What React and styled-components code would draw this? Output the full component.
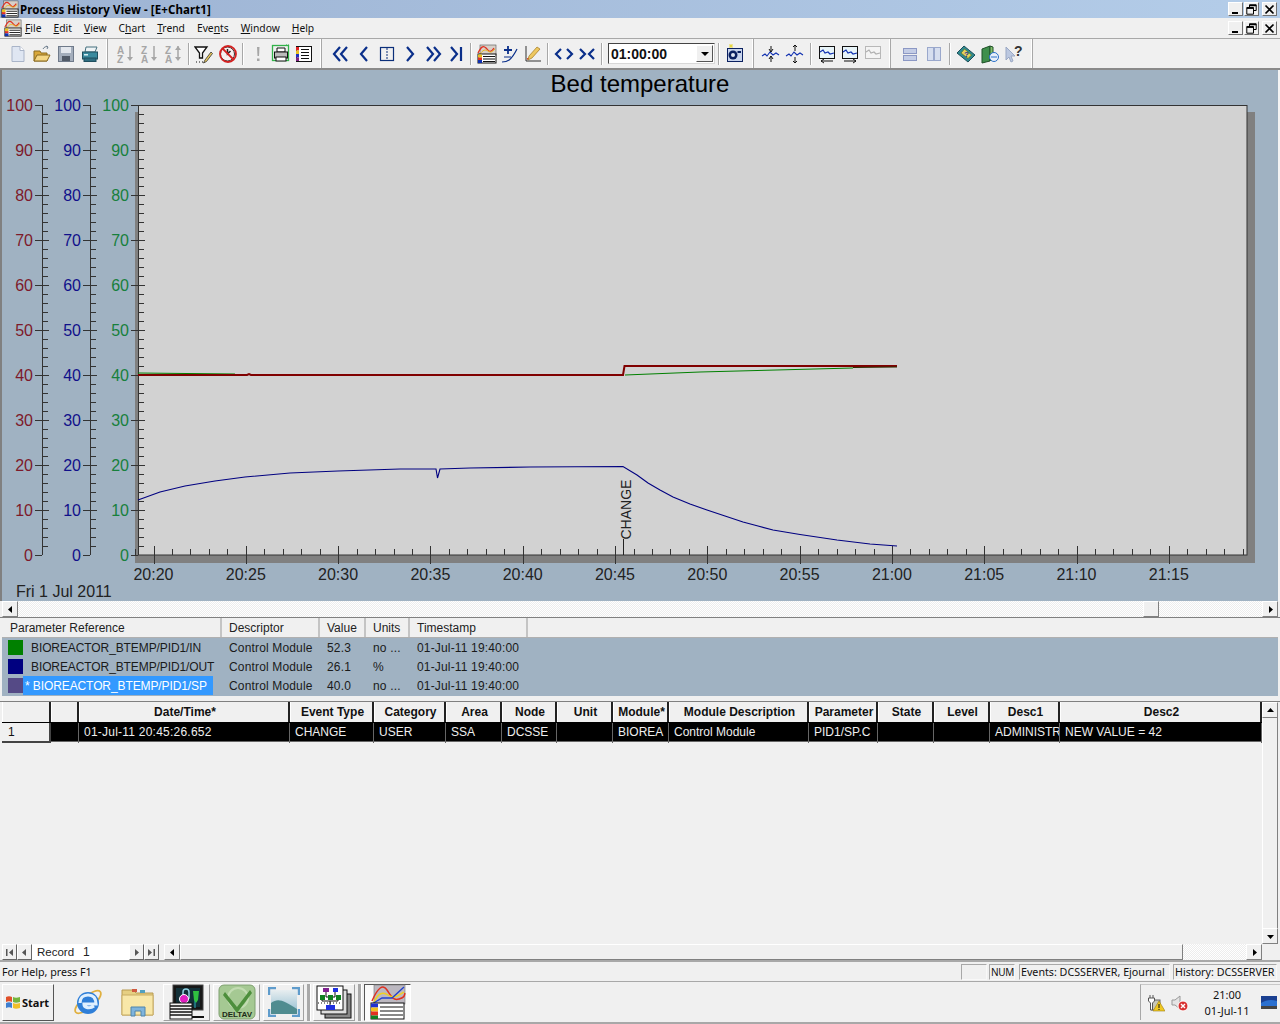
import React from "react";
import styled, { createGlobalStyle } from "styled-components";

const UI = `"Noto Sans", "DejaVu Sans", sans-serif`;
const ARIAL = `"Liberation Sans", Arial, sans-serif`;

const GlobalStyle = createGlobalStyle`
  html, body {
    margin: 0;
    padding: 0;
    background: #f0f0f0;
  }
`;

const menuItems = [
  ["", "F", "ile"],
  ["", "E", "dit"],
  ["", "V", "iew"],
  ["C", "h", "art"],
  ["", "T", "rend"],
  ["Eve", "n", "ts"],
  ["", "W", "indow"],
  ["", "H", "elp"],
];

const legendCols = [
  ["Parameter Reference", 219],
  ["Descriptor", 98],
  ["Value", 46],
  ["Units", 44],
  ["Timestamp", 118],
];

const legendRows = [
  { color: "#008000", name: "BIOREACTOR_BTEMP/PID1/IN", value: "52.3", units: "no ..." },
  { color: "#000080", name: "BIOREACTOR_BTEMP/PID1/OUT", value: "26.1", units: "%" },
  { color: "#554a86", name: "BIOREACTOR_BTEMP/PID1/SP", value: "40.0", units: "no ...", selected: true },
];

const gridCols = [
  ["Date/Time*", "01-Jul-11 20:45:26.652"],
  ["Event Type", "CHANGE"],
  ["Category", "USER"],
  ["Area", "SSA"],
  ["Node", "DCSSE"],
  ["Unit", ""],
  ["Module*", "BIOREA"],
  ["Module Description", "Control Module"],
  ["Parameter", "PID1/SP.C"],
  ["State", ""],
  ["Level", ""],
  ["Desc1", "ADMINISTR"],
  ["Desc2", "NEW VALUE = 42"],
];

const GRID_TEMPLATE = "49px 28px 211px 84px 72px 56px 55px 56px 56px 140px 69px 56px 56px 70px 202px";

const App = () => (
  <Screen>
    <GlobalStyle />
    <TitleBar>
      <ChartGlyph size={18} />
      <TitleText>Process History View - [E+Chart1]</TitleText>
      <WindowButtons />
    </TitleBar>
    <MenuBar>
      <ChartGlyph size={18} />
      <MenuList>
        {menuItems.map(([before, key, after]) => (
          <MenuItem key={before + key + after}>
            {before}
            <u>{key}</u>
            {after}
          </MenuItem>
        ))}
      </MenuList>
      <WindowButtons />
    </MenuBar>
    <Toolbar>
      <Band $w={108} $pl={6}>
        <ToolBtn><NewIcon /></ToolBtn>
        <ToolBtn><OpenIcon /></ToolBtn>
        <ToolBtn><SaveIcon /></ToolBtn>
        <ToolBtn><PrintIcon /></ToolBtn>
      </Band>
      <Band $w={214} $pl={6}>
        <ToolBtn><SortIcon top="A" bottom="Z" /></ToolBtn>
        <ToolBtn><SortIcon top="Z" bottom="A" /></ToolBtn>
        <ToolBtn><SortIcon top="Z" bottom="A" both /></ToolBtn>
        <Sep $m={2} />
        <ToolBtn><FilterIcon /></ToolBtn>
        <ToolBtn><NoClockIcon /></ToolBtn>
        <Sep $m={2} />
        <ToolBtn $w={23}><AlertIcon /></ToolBtn>
        <ToolBtn $w={23}><PreviewIcon /></ToolBtn>
        <ToolBtn $w={23}><ListIcon /></ToolBtn>
      </Band>
      <Band $w={432} $pl={7}>
        <ToolBtn $w={23}><NavIcon d="M9 3 3 10l6 7M16 3l-6 7 6 7" /></ToolBtn>
        <ToolBtn $w={23}><NavIcon d="M13 3 7 10l6 7" /></ToolBtn>
        <ToolBtn $w={23}><PaneIcon /></ToolBtn>
        <ToolBtn $w={23}><NavIcon d="M7 3l6 7-6 7" /></ToolBtn>
        <ToolBtn $w={23}><NavIcon d="M4 3l6 7-6 7M11 3l6 7-6 7" /></ToolBtn>
        <ToolBtn $w={23}><NavIcon d="M5 3l6 7-6 7M15 3v14" /></ToolBtn>
        <Sep />
        <ToolBtn $w={23}><ChartGlyph size={20} /></ToolBtn>
        <ToolBtn $w={23}><PlusTrendIcon /></ToolBtn>
        <ToolBtn $w={23}><EditTrendIcon /></ToolBtn>
        <Sep />
        <ToolBtn $w={23}><NavIcon d="M7 5 2 10l5 5M13 5l5 5-5 5" /></ToolBtn>
        <ToolBtn $w={23}><NavIcon d="M3 5l5 5-5 5M17 5l-5 5 5 5" /></ToolBtn>
        <Sep />
        <Combo>
          <ComboText>01:00:00</ComboText>
          <ComboDrop><DownArrow /></ComboDrop>
        </Combo>
        <Sep />
        <ToolBtn $w={23}><CameraIcon /></ToolBtn>
      </Band>
      <Band $w={137} $pl={5}>
        <ToolBtn><ZoomTrendIcon d="M10 2v6M8 5l2 3 2-3M10 18v-6M8 15l2-3 2 3" /></ToolBtn>
        <ToolBtn><ZoomTrendIcon d="M10 1v6M8 3l2-2 2 2M10 19v-6M8 17l2 2 2-2" /></ToolBtn>
        <Sep />
        <ToolBtn $w={23}><ScaleIcon d="M16 17H4M7 15l-3 2 3 2" /></ToolBtn>
        <ToolBtn $w={23}><ScaleIcon d="M4 17h12M13 15l3 2-3 2" /></ToolBtn>
        <ToolBtn $w={23}><ScaleIcon faded /></ToolBtn>
      </Band>
      <Band $w={142} $pl={7}>
        <ToolBtn><StackIcon /></ToolBtn>
        <ToolBtn><StackIcon vertical /></ToolBtn>
        <Sep />
        <ToolBtn><BookIcon /></ToolBtn>
        <ToolBtn><BooksIcon /></ToolBtn>
        <ToolBtn><HelpPointerIcon /></ToolBtn>
      </Band>
    </Toolbar>

    <ChartPanel>
      <ChartTitle>Bed temperature</ChartTitle>
      <TrendChart />
      <ChartDate>Fri 1 Jul 2011</ChartDate>
    </ChartPanel>

    <HScroll>
      <ScrollBtn><SmallArrow dir="left" /></ScrollBtn>
      <ScrollTrack $w={1125} />
      <ScrollBtn />
      <ScrollTrack $w={103} />
      <ScrollBtn><SmallArrow dir="right" /></ScrollBtn>
    </HScroll>

    <Legend>
      <LegendHead>
        {legendCols.map(([label, w]) => (
          <LegendHeadCell key={label} $w={w}>{label}</LegendHeadCell>
        ))}
      </LegendHead>
      {legendRows.map((row) => (
        <LegendRow key={row.name}>
          <Swatch $color={row.color} />
          <LegendName $selected={row.selected}>
            {row.selected ? "* " : ""}
            {row.name}
          </LegendName>
          <LegendCell $w={98}>Control Module</LegendCell>
          <LegendCell $w={46}>{row.value}</LegendCell>
          <LegendCell $w={44}>{row.units}</LegendCell>
          <LegendCell $w={118}>01-Jul-11 19:40:00</LegendCell>
        </LegendRow>
      ))}
    </Legend>

    <GridPanel>
      <GridMain>
        <GridTable>
          <GridHead>
            <HeadCell />
            <HeadCell />
            {gridCols.map(([label]) => (
              <HeadCell key={label}>{label}</HeadCell>
            ))}
          </GridHead>
          <GridRow>
            <RowHeader>1</RowHeader>
            <RowCell />
            {gridCols.map(([label, value]) => (
              <RowCell key={label} $spaced={label === "Date/Time*"}>{value}</RowCell>
            ))}
          </GridRow>
        </GridTable>
        <VScroll>
          <ScrollBtn><SmallArrow dir="up" /></ScrollBtn>
          <VTrack />
          <ScrollBtn><SmallArrow dir="down" /></ScrollBtn>
        </VScroll>
      </GridMain>
      <Pager>
        <PagerBtn><SmallArrow dir="first" /></PagerBtn>
        <PagerBtn><SmallArrow dir="left" muted /></PagerBtn>
        <PagerLabel>Record</PagerLabel>
        <PagerInput>1</PagerInput>
        <PagerBtn><SmallArrow dir="right" muted /></PagerBtn>
        <PagerBtn><SmallArrow dir="last" /></PagerBtn>
        <PagerGap />
        <ScrollBtn><SmallArrow dir="left" /></ScrollBtn>
        <PagerThumb />
        <PagerTrack />
        <ScrollBtn><SmallArrow dir="right" /></ScrollBtn>
        <PagerCorner />
      </Pager>
    </GridPanel>

    <StatusBar>
      <StatusHelp>For Help, press F1</StatusHelp>
      <StatusPane $w={26} />
      <StatusPane $w={26} $ml={2} $tight>NUM</StatusPane>
      <StatusPane $w={151} $ml={4}>Events: DCSSERVER, Ejournal</StatusPane>
      <StatusPane $w={104} $ml={3}>History: DCSSERVER</StatusPane>
    </StatusBar>

    <Taskbar>
      <StartButton>
        <WindowsFlag />
        <span>Start</span>
      </StartButton>
      <QuickIcon $w={49} $ml={9}><IeIcon /></QuickIcon>
      <QuickIcon $w={51}><FolderIcon /></QuickIcon>
      <TaskButton $w={47}><SecurityIcon /></TaskButton>
      <TaskButton $w={47}><DeltaVIcon /></TaskButton>
      <TaskButton $w={41}><PictureIcon /></TaskButton>
      <TaskGrip />
      <TaskButton $w={42}><NetworkIcon /></TaskButton>
      <TaskGrip />
      <TaskButton $w={47} $active><TrendAppIcon /></TaskButton>
      <Tray>
        <PlugWarnIcon />
        <MuteIcon />
        <Clock>
          <div>21:00</div>
          <div>01-Jul-11</div>
        </Clock>
        <DesktopIcon />
      </Tray>
    </Taskbar>
  </Screen>
);

export default App;

/* window buttons */

const WindowButtons = () => (
  <WinGroup>
    <WinBtn>
      <svg width="11" height="11" viewBox="0 0 11 11"><path d="M2 9h6" stroke="#000" strokeWidth="2" /></svg>
    </WinBtn>
    <WinBtn>
      <svg width="11" height="11" viewBox="0 0 11 11" fill="none" stroke="#000">
        <path d="M3.5 3V.8h6.7v5.7H8" /><path d="M3.5 1.5h6.7" strokeWidth="1.5" />
        <path d="M.8 3.5h6.7v6.7H.8z" /><path d="M.8 4.2h6.7" strokeWidth="1.5" />
      </svg>
    </WinBtn>
    <WinBtn $close>
      <svg width="11" height="11" viewBox="0 0 11 11"><path d="M1.5 1.5l8 8M9.5 1.5l-8 8" stroke="#000" strokeWidth="1.7" /></svg>
    </WinBtn>
  </WinGroup>
);

/* chart */

const RED = "#7d1a2a";
const BLUE = "#10108a";
const GREEN = "#17803c";
const TICK = "#333";
const xMajor = [...Array(12).keys()].map((i) => 153.5 + i * 92.3);
const timeLabels = ["20:20", "20:25", "20:30", "20:35", "20:40", "20:45", "20:50", "20:55", "21:00", "21:05", "21:10", "21:15"];
const bluePoints =
  "138,500 160,492 185,486 215,481 245,477 290,473 338,471 400,469 436,469 437.5,478 440,469 470,468 530,467 623,466.5 " +
  "637,475 648,483 660,490 673,497 690,504 707,510 725,516 743,522 758,526 773,530 800,534.5 837,540 870,544 897,546";

const YAxis = ({ x, color }) => {
  const marks = [];
  for (let v = 0; v <= 100; v += 2) {
    const y = 555 - v * 4.5;
    if (v % 10 === 0) {
      marks.push(
        <path key={v} d={`M${x - 7} ${y + 0.5}H${x + (v === 100 || v === 0 ? 0 : 7)}`} stroke={TICK} />
      );
      marks.push(
        <text key={`t${v}`} x={x - 9} y={y + 6} textAnchor="end" fontSize="16" fill={color} fontFamily={ARIAL}>
          {v}
        </text>
      );
    } else {
      marks.push(<path key={v} d={`M${x} ${y + 0.5}H${x + 6}`} stroke={TICK} />);
    }
  }
  return (
    <g>
      <path d={`M${x + 0.5} 105V555`} stroke={TICK} />
      {marks}
    </g>
  );
};

const TrendChart = () => {
  const minor = [];
  for (let x = 135.1; x < 1246; x += 18.46) minor.push(x);
  return (
    <ChartSvg viewBox="2 98 1276 485" width="1276" height="485">
      <rect x="135" y="112" width="1120" height="451" fill="#808080" />
      <rect x="138.5" y="105.5" width="1108.5" height="449.5" fill="#d2d2d2" stroke="#333" />
      <YAxis x={42} color={RED} />
      <YAxis x={90} color={BLUE} />
      <YAxis x={138} color={GREEN} />
      {minor.map((x) => (
        <path key={x} d={`M${Math.round(x) + 0.5} 549V555`} stroke={TICK} />
      ))}
      {xMajor.map((x, i) => (
        <g key={x}>
          <path d={`M${Math.round(x) + 0.5} 546V564`} stroke={TICK} />
          <text x={x} y="580" textAnchor="middle" fontSize="16" fill="#222" fontFamily={ARIAL}>
            {timeLabels[i]}
          </text>
        </g>
      ))}
      <polyline points="138,373 235,374" fill="none" stroke="#008000" />
      <polyline points="625,375 700,372 853,368" fill="none" stroke="#008000" />
      <polyline points={bluePoints} fill="none" stroke="#000080" strokeWidth="1.1" />
      <polyline points="138,375 247,375 249,374 251,375 623,375 624.5,366 897,366" fill="none" stroke="#800000" strokeWidth="2" />
      <polyline points="853,367.5 897,367" fill="none" stroke="#2b2b00" />
      <path d="M623.5 539V555" stroke="#222" />
      <text
        transform="translate(631 539.5) rotate(-90)"
        fontSize="14"
        fill="#222"
        fontFamily={ARIAL}
      >
        CHANGE
      </text>
    </ChartSvg>
  );
};

/* small arrows for scrollbars and the record pager */

const arrowPaths = {
  left: "M7 2v7L3 5.5z",
  right: "M4 2v7l4-3.5z",
  up: "M2 7h7L5.5 3z",
  down: "M2 4h7L5.5 8z",
  first: "M2 2h1.5v7H2zM9 2v7L5 5.5z",
  last: "M9 2H7.5v7H9zM2 2v7l4-3.5z",
};

const SmallArrow = ({ dir, muted }) => (
  <svg width="11" height="11" viewBox="0 0 11 11">
    <path d={arrowPaths[dir]} fill={muted || dir === "first" || dir === "last" ? "#555" : "#000"} />
  </svg>
);

/* toolbar icons */

const NewIcon = () => (
  <Ico viewBox="0 0 20 20">
    <path d="M4 2.5h8l4 4v11H4z" fill="#dfe6f2" stroke="#a9b4c8" />
    <path d="M12 2.5v4h4" fill="#fff" stroke="#a9b4c8" />
  </Ico>
);

const OpenIcon = () => (
  <Ico viewBox="0 0 20 20">
    <path d="M2 7h6l1 2h6v8H2z" fill="#d9a83a" stroke="#8a6a20" />
    <path d="M2 17l3-6h13l-3 6z" fill="#f4d683" stroke="#8a6a20" />
    <path d="M11 5c1-2 3-3 5-2M16 3l-2-1M16 3l-1 2" fill="none" stroke="#6e7e8e" />
  </Ico>
);

const SaveIcon = () => (
  <Ico viewBox="0 0 20 20">
    <rect x="2.5" y="2.5" width="15" height="15" fill="#a4aebc" stroke="#6f7a8a" />
    <rect x="5" y="3" width="10" height="6" fill="#e4e8ee" />
    <rect x="6" y="12" width="8" height="5" fill="#525b68" />
  </Ico>
);

const PrintIcon = () => (
  <Ico viewBox="0 0 20 20">
    <path d="M6 3h11l-2 5H5z" fill="#eef3f5" stroke="#45707f" />
    <rect x="2.5" y="8" width="15" height="7" fill="#3a8a9e" stroke="#1f4f5f" />
    <rect x="4" y="14" width="12" height="3.5" fill="#2f6d80" stroke="#1f4f5f" />
    <rect x="4" y="10" width="4" height="1.5" fill="#d5edf2" />
  </Ico>
);

const SortIcon = ({ top, bottom, both }) => (
  <Ico viewBox="0 0 20 20">
    <text x="1" y="9.5" fontSize="10" fontWeight="700" fill="#a6a6a6" fontFamily={ARIAL}>{top}</text>
    <text x="1" y="18.5" fontSize="10" fontWeight="700" fill="#a6a6a6" fontFamily={ARIAL}>{bottom}</text>
    <path d="M14 2v12" stroke="#a6a6a6" strokeWidth="1.5" />
    <path d="M11 13h6l-3 4z" fill="#a6a6a6" />
    {both && <path d="M11 6h6l-3-4z" fill="#a6a6a6" />}
  </Ico>
);

const FilterIcon = () => (
  <Ico viewBox="0 0 20 20">
    <path d="M1 3h12L8.5 9v5h-3V9z" fill="#fff" stroke="#111" strokeWidth="1.3" />
    <path d="M2 18h1M5 18h1M8 18h1" stroke="#111" />
    <path d="M11 16l-1.5 3 3-1.5 6-8-1.5-1.5z" fill="#e8c85c" stroke="#333" strokeWidth=".8" />
  </Ico>
);

const NoClockIcon = () => (
  <Ico viewBox="0 0 20 20">
    <circle cx="9.5" cy="10" r="7" fill="#f6eeee" stroke="#333" />
    <path d="M9.5 5v5l3-3" fill="none" stroke="#222" strokeWidth="1.5" />
    <circle cx="10" cy="10" r="8" fill="none" stroke="#d42020" strokeWidth="1.8" />
    <path d="M4.5 4.5l11 11" stroke="#d42020" strokeWidth="1.8" />
  </Ico>
);

const AlertIcon = () => (
  <Ico viewBox="0 0 20 20">
    <path d="M9 3h2.5l-.5 9H9.5z" fill="#a6a6a6" />
    <rect x="9" y="14.5" width="2.5" height="2.5" fill="#a6a6a6" />
  </Ico>
);

const PreviewIcon = () => (
  <Ico viewBox="0 0 20 20">
    <rect x="1.5" y="1.5" width="16" height="15" fill="none" stroke="#33b24a" strokeWidth="1.3" />
    <path d="M15 1h4" stroke="#33b24a" strokeDasharray="1 1" />
    <path d="M6 4h8v4H6z" fill="#fff" stroke="#111" />
    <rect x="3.5" y="8" width="13" height="6" fill="#bbb" stroke="#111" />
    <rect x="5" y="13" width="10" height="4" fill="#fff" stroke="#111" />
  </Ico>
);

const ListIcon = () => (
  <Ico viewBox="0 0 20 20">
    <rect x="2.5" y="2.5" width="15" height="15" fill="#fff" stroke="#111" />
    <rect x="2" y="3" width="3" height="3.5" fill="#e02020" />
    <rect x="2" y="6.5" width="3" height="3.5" fill="#e8c020" />
    <rect x="2" y="10" width="3" height="3.5" fill="#2030c0" />
    <rect x="2" y="13.5" width="3" height="3.5" fill="#802080" />
    <path d="M7 5.5h8M7 8.5h8M7 11.5h8M7 14.5h8" stroke="#111" />
  </Ico>
);

const NavIcon = ({ d }) => (
  <Ico viewBox="0 0 20 20">
    <path d={d} fill="none" stroke="#0a2f8a" strokeWidth="2.2" />
  </Ico>
);

const PaneIcon = () => (
  <Ico viewBox="0 0 20 20">
    <rect x="3.5" y="3.5" width="13" height="13" fill="none" stroke="#0a2f7a" strokeWidth="1.2" />
    <path d="M10 4v12" stroke="#0a2f7a" strokeDasharray="2 1" />
  </Ico>
);

const PlusTrendIcon = () => (
  <Ico viewBox="0 0 20 20">
    <path d="M8 2v8M4 6h8" stroke="#0a2f8a" strokeWidth="1.8" />
    <path d="M4 13h7" stroke="#0a2f8a" />
    <path d="M2 18c5 0 9-1 15-13" fill="none" stroke="#0a2f8a" strokeWidth="1.2" />
  </Ico>
);

const EditTrendIcon = () => (
  <Ico viewBox="0 0 20 20">
    <path d="M3 2v15h15" fill="none" stroke="#333" />
    <path d="M4 15c4-1 6-5 12-10" fill="none" stroke="#d83020" strokeWidth="1.3" />
    <path d="M5 16l1-4 8-9 3 2-8 9z" fill="#eec860" stroke="#a07820" strokeWidth=".7" />
  </Ico>
);

const CameraIcon = () => (
  <Ico viewBox="0 0 20 20">
    <path d="M6 0v4M4 2h4M4.5.5l3 3M7.5.5l-3 3" stroke="#e8d840" />
    <rect x="2.5" y="4.5" width="15" height="13" fill="#c8d4ec" stroke="#0a2060" />
    <circle cx="8" cy="11" r="4.5" fill="#0a2060" />
    <circle cx="8" cy="11" r="2" fill="#dfe6f2" />
    <rect x="12.5" y="7" width="3.5" height="2" fill="#0a2060" />
  </Ico>
);

const ZoomTrendIcon = ({ d }) => (
  <Ico viewBox="0 0 20 20">
    <path d="M1 12l3-2 2 2 3-4 3 3 3-2 3 2" fill="none" stroke="#1030b0" strokeWidth="1.1" />
    <path d={d} fill="none" stroke="#111" />
  </Ico>
);

const ScaleIcon = ({ d, faded }) => (
  <Ico viewBox="0 0 20 20">
    <rect x="2.5" y="2.5" width="15" height="12" fill={faded ? "#f4f4f4" : "#e8f4f8"} stroke={faded ? "#b8b8b8" : "#111"} />
    <path d="M3 8l3-2 2 3 3-1 2 2 4-1" fill="none" stroke={faded ? "#b0b0b0" : "#1030b0"} strokeWidth="1.2" />
    {d && <path d={d} fill="none" stroke="#111" />}
  </Ico>
);

const StackIcon = ({ vertical }) => (
  <Ico viewBox="0 0 20 20">
    {vertical ? (
      <>
        <rect x="3.5" y="3.5" width="6" height="13" fill="#d6deef" stroke="#9aa8cc" />
        <rect x="10.5" y="3.5" width="6" height="13" fill="#d6deef" stroke="#9aa8cc" />
      </>
    ) : (
      <>
        <rect x="3.5" y="4.5" width="13" height="5" fill="#c4cde6" stroke="#8c98c4" />
        <rect x="3.5" y="11.5" width="13" height="5" fill="#c4cde6" stroke="#8c98c4" />
      </>
    )}
  </Ico>
);

const BookIcon = () => (
  <Ico viewBox="0 0 20 20">
    <path d="M1 9l7-7 11 9-7 7z" fill="#2f8a8f" stroke="#1d4f5a" />
    <path d="M5 9l3.5-4 7 6-3.500 3.500z" fill="#e8d25a" stroke="#52702a" strokeWidth=".7" />
    <text x="8" y="13" fontSize="8" fontWeight="700" fill="#1030a0" fontFamily={ARIAL}>?</text>
  </Ico>
);

const BooksIcon = () => (
  <Ico viewBox="0 0 20 20">
    <path d="M2 5l8-3v15l-8 2z" fill="#3f8f4c" stroke="#1f5028" />
    <path d="M10 2l3 1v10l-3 4z" fill="#83c06a" stroke="#1f5028" />
    <circle cx="14" cy="13" r="4.5" fill="#e8f0fa" stroke="#2a70c8" />
    <path d="M11 13h6" stroke="#2a70c8" />
  </Ico>
);

const HelpPointerIcon = () => (
  <Ico viewBox="0 0 20 20">
    <path d="M2 3v13l3-3 2 5 2-1-2-5h4z" fill="#bcc8e0" stroke="#9aa8c4" />
    <text x="10" y="12" fontSize="14" fontWeight="700" fill="#333" fontFamily={ARIAL}>?</text>
  </Ico>
);

const ChartGlyph = ({ size }) => (
  <GlyphSvg width={size} height={size} viewBox="0 0 20 20">
    <rect x="3" y="1" width="16" height="10" fill="#d8d0c8" stroke="#555" strokeWidth=".6" />
    <path d="M1 9C4 3 6 1 9 4s4 6 8 0" fill="none" stroke="#e03020" strokeWidth="1.3" />
    <path d="M3 10c3-4 5-5 8-3s4 1 7-2" fill="none" stroke="#e8b820" />
    <rect x="1" y="10" width="18" height="9" fill="#fff" stroke="#111" />
    <rect x="1" y="10.5" width="4" height="3" fill="#e8c020" />
    <rect x="1" y="13.5" width="4" height="2.5" fill="#e03020" />
    <rect x="1" y="16" width="4" height="3" fill="#1030b0" />
    <path d="M6 12.5h12M6 15h12M6 17.5h12" stroke="#111" />
  </GlyphSvg>
);

/* taskbar icons */

const WindowsFlag = () => (
  <svg width="16" height="16" viewBox="0 0 16 16">
    <path d="M1 3c2-1 4-1 6 0v5c-2-1-4-1-6 0z" fill="#e0502a" />
    <path d="M8 3c2 1 4 1 7 0v5c-3 1-5 1-7 0z" fill="#74b53c" />
    <path d="M1 9c2-1 4-1 6 0v5c-2-1-4-1-6 0z" fill="#3f7fd0" />
    <path d="M8 9c2 1 4 1 7 0v5c-3 1-5 1-7 0z" fill="#f0bf2a" />
  </svg>
);

const IeIcon = () => (
  <svg width="32" height="32" viewBox="0 0 32 32">
    <ellipse cx="16" cy="16" rx="16" ry="6" transform="rotate(-40 16 16)" fill="none" stroke="#e0b040" strokeWidth="1.8" />
    <circle cx="16" cy="17" r="11" fill="#2f7fd8" />
    <path d="M8 17c0-5 3-8 8-8s8 3 8 9H12c0 4 6 5 10 2" fill="none" stroke="#dff0ff" strokeWidth="3.2" />
  </svg>
);

const FolderIcon = () => (
  <svg width="34" height="32" viewBox="0 0 34 32">
    <path d="M1 4h11l3 3h17v22H1z" fill="#e6cf82" stroke="#b89a50" />
    <path d="M1 9h31v20H1z" fill="#f8e7a8" stroke="#c8ac62" />
    <rect x="11" y="3" width="5" height="3" fill="#d05a40" />
    <rect x="19" y="4" width="5" height="3" fill="#50a0c0" />
    <path d="M10 30V21h14v9h-4v-5h-6v5z" fill="#7fb4dc" stroke="#4f84ac" />
  </svg>
);

const SecurityIcon = () => (
  <svg width="36" height="36" viewBox="0 0 36 36">
    <rect x="4" y="1" width="30" height="25" fill="#161616" stroke="#444" />
    <rect x="7" y="4" width="24" height="19" fill="#123038" />
    <path d="M26 8v16" stroke="#2fb0c0" />
    <path d="M14 8c0-4 6-4 6 0v6h-6z" fill="none" stroke="#90d0e0" strokeWidth="1.5" />
    <circle cx="15" cy="15" r="4.5" fill="#e020c0" stroke="#fff" />
    <path d="M24 7h6l-1 9-2 3-2-3z" fill="#30c040" />
    <rect x="1" y="19" width="22" height="16" fill="#f4f4f4" stroke="#111" />
    <path d="M1 22h22M1 25h22M1 28h22M1 31h22" stroke="#111" strokeWidth="1.4" />
    <path d="M23 33h12" stroke="#111" strokeWidth="2" />
  </svg>
);

const DeltaVIcon = () => (
  <svg width="40" height="36" viewBox="0 0 40 36">
    <rect x="2" y="1" width="36" height="34" rx="5" fill="#a5c993" stroke="#7fa070" />
    <circle cx="21" cy="14" r="10" fill="none" stroke="#c2dcb2" strokeWidth="2" />
    <path d="M8 8l12 15L33 6l2 3-15 20L6 11z" fill="#4d8f3c" />
    <text x="20" y="33" textAnchor="middle" fontSize="8" fontWeight="700" fill="#1d2b18" fontFamily={ARIAL} textLength="30">DELTAV</text>
  </svg>
);

const PictureIcon = () => (
  <svg width="32" height="30" viewBox="0 0 32 30">
    <defs>
      <linearGradient id="sky" x1="0" y1="0" x2="0" y2="1">
        <stop offset="0" stopColor="#e8eef0" />
        <stop offset="1" stopColor="#8fbcd0" />
      </linearGradient>
    </defs>
    <rect x="3" y="3" width="26" height="24" fill="url(#sky)" />
    <path d="M3 16c7-5 12-3 26 6v5H3z" fill="#4f8c90" />
    <path d="M1 8V1h7M24 1h7v7M31 22v7h-7M8 29H1v-7" fill="none" stroke="#5f9ccc" strokeWidth="2.5" />
  </svg>
);

const NetworkIcon = () => (
  <svg width="36" height="34" viewBox="0 0 36 34">
    <rect x="9" y="9" width="26" height="24" fill="#888" stroke="#111" />
    <rect x="5" y="5" width="26" height="24" fill="#ddd" stroke="#111" />
    <rect x="1" y="1" width="26" height="24" fill="#fff" stroke="#111" />
    <rect x="7" y="3" width="6" height="4" fill="#802090" />
    <rect x="17" y="3" width="5" height="4" fill="#2030e0" />
    <path d="M10 7v5h9V7M6 13v3h16v-3M14 16v4" fill="none" stroke="#111" />
    <rect x="4" y="10" width="5" height="5" fill="#108020" />
    <rect x="12" y="10" width="5" height="5" fill="#108020" />
    <rect x="20" y="10" width="5" height="5" fill="#108020" />
    <rect x="10" y="20" width="9" height="5" fill="#2030e0" />
    <path d="M2 18h24" stroke="#111" strokeDasharray="1 2" />
  </svg>
);

const TrendAppIcon = () => (
  <svg width="36" height="36" viewBox="0 0 36 36">
    <rect x="4" y="1" width="31" height="19" fill="#bcb8c0" stroke="#777" strokeWidth=".6" />
    <path d="M2 17C8 3 13 0 17 6s6 11 12 9 5-3 6-6" fill="none" stroke="#e03020" strokeWidth="1.5" />
    <path d="M4 18c4-8 8-11 14-7s10 1 16-3" fill="none" stroke="#f0d020" strokeWidth="1.5" />
    <path d="M2 20l10-6 10 0 12-11" fill="none" stroke="#2040d0" strokeWidth="1.3" />
    <rect x="1" y="19" width="33" height="16" fill="#fff" stroke="#111" />
    <rect x="1" y="19.5" width="7" height="4" fill="#2030d0" />
    <rect x="1" y="23.5" width="7" height="4" fill="#f0c020" />
    <rect x="1" y="27.5" width="7" height="4" fill="#e03020" />
    <rect x="1" y="31.5" width="7" height="3.5" fill="#108020" />
    <path d="M10 23h23M10 27h23M10 31h23" stroke="#111" strokeWidth="1.2" />
  </svg>
);

const PlugWarnIcon = () => (
  <svg width="18" height="18" viewBox="0 0 18 18">
    <rect x="5" y="6" width="8" height="10" fill="#c8c8b8" stroke="#666" />
    <path d="M3 1v3M6 1v3M1.5 4h6v3l-2 2v7h-2V9l-2-2z" fill="#fff" stroke="#555" />
    <path d="M12 7l6 10H6z" fill="#f0c820" stroke="#a08010" strokeWidth=".6" />
    <path d="M12 10v4M12 15v1" stroke="#111" />
  </svg>
);

const MuteIcon = () => (
  <svg width="18" height="18" viewBox="0 0 18 18">
    <path d="M1 6h3l5-4v13l-5-4H1z" fill="#e4e4e4" stroke="#999" />
    <circle cx="12" cy="12" r="5" fill="#d83030" stroke="#fff" />
    <path d="M10 10l4 4M14 10l-4 4" stroke="#fff" strokeWidth="1.4" />
  </svg>
);

const DesktopIcon = () => (
  <svg width="16" height="14" viewBox="0 0 16 14">
    <rect x="0" y="0" width="16" height="12" fill="#2a70d0" />
    <path d="M0 0h16v5C10 3 5 4 0 7z" fill="#1a3f90" />
    <rect x="0" y="10" width="16" height="3" fill="#444" />
  </svg>
);

/* layout */

const Screen = styled.div`
  width: 1280px;
  height: 1024px;
  display: flex;
  flex-direction: column;
  overflow: hidden;
  background: #f0f0f0;
  font-family: ${UI};
`;

const TitleBar = styled.div`
  height: 18px;
  flex-shrink: 0;
  display: flex;
  align-items: center;
  padding-left: 1px;
  background: linear-gradient(90deg, #9db3d3, #b4cde9);
`;

const TitleText = styled.div`
  margin-left: 1px;
  font-size: 11.5px;
  font-weight: 700;
  color: #000;
  white-space: nowrap;
  letter-spacing: 0.1px;
`;

const GlyphSvg = styled.svg`
  flex-shrink: 0;
`;

const WinGroup = styled.div`
  margin-left: auto;
  margin-right: 3px;
  display: flex;
`;

const WinBtn = styled.div`
  width: 15px;
  height: 14px;
  box-sizing: border-box;
  margin-left: ${(p) => (p.$close ? "3px" : "1px")};
  display: flex;
  align-items: center;
  justify-content: center;
  background: #f0f0f0;
  border: 1px solid;
  border-color: #fff #707070 #707070 #fff;
`;

const MenuBar = styled.div`
  height: 20px;
  flex-shrink: 0;
  display: flex;
  align-items: center;
  padding-left: 4px;
  background: #f0f0f0;
`;

const MenuList = styled.div`
  display: flex;
  gap: 12px;
  margin-left: 3px;
`;

const MenuItem = styled.div`
  font-size: 10.3px;
  color: #111;
  white-space: nowrap;
`;

const Toolbar = styled.div`
  height: 32px;
  box-sizing: border-box;
  display: flex;
  flex-shrink: 0;
  border-top: 1px solid #a8a8a8;
  border-bottom: 2px solid #8a8a8a;
  background: #f0f0f0;
`;

const Band = styled.div`
  width: ${(p) => p.$w}px;
  box-sizing: border-box;
  padding-left: ${(p) => p.$pl}px;
  display: flex;
  align-items: center;
  border-right: 1px solid #a8a8a8;
  box-shadow: inset -1px 0 0 #fff;
`;

const ToolBtn = styled.div`
  width: ${(p) => p.$w || 24}px;
  height: 24px;
  flex-shrink: 0;
  display: flex;
  align-items: center;
  justify-content: center;
`;

const Ico = styled.svg`
  width: 20px;
  height: 20px;
`;

const Sep = styled.div`
  width: 1px;
  height: 22px;
  flex-shrink: 0;
  margin: 0 ${(p) => p.$m || 3}px;
  background: #a8a8a8;
  border-right: 1px solid #fff;
`;

const Combo = styled.div`
  width: 107px;
  height: 21px;
  box-sizing: border-box;
  margin-left: 2px;
  display: flex;
  align-items: center;
  background: #fff;
  border: 1px solid;
  border-color: #444 #d8d8d8 #d8d8d8 #444;
`;

const ComboText = styled.div`
  flex: 1;
  padding-left: 2px;
  font-family: ${ARIAL};
  font-size: 14px;
  font-weight: 700;
  color: #111;
`;

const ComboDrop = styled.div`
  width: 17px;
  height: 17px;
  box-sizing: border-box;
  margin-right: 1px;
  display: flex;
  align-items: center;
  justify-content: center;
  background: #f0f0f0;
  border: 1px solid;
  border-color: #fff #555 #555 #fff;
`;

const DownArrow = styled.span`
  width: 0;
  height: 0;
  border-left: 4px solid transparent;
  border-right: 4px solid transparent;
  border-top: 4px solid #000;
`;

const ChartPanel = styled.div`
  height: 531px;
  flex-shrink: 0;
  box-sizing: border-box;
  display: flex;
  flex-direction: column;
  background: #a0b2c2;
  border-left: 2px solid #808080;
  border-right: 2px solid #f4f4f4;
`;

const ChartTitle = styled.h1`
  height: 28px;
  margin: 0;
  text-align: center;
  font-family: ${ARIAL};
  font-size: 24px;
  font-weight: 400;
  line-height: 28px;
  color: #000;
`;

const ChartSvg = styled.svg`
  display: block;
  flex-shrink: 0;
`;

const ChartDate = styled.div`
  height: 18px;
  padding-left: 14px;
  font-family: ${ARIAL};
  font-size: 16px;
  line-height: 18px;
  color: #222;
`;

const HScroll = styled.div`
  height: 17px;
  flex-shrink: 0;
  box-sizing: border-box;
  padding: 0 2px;
  display: flex;
  border-bottom: 1px solid #808080;
`;

const ScrollBtn = styled.div`
  width: 16px;
  height: 16px;
  flex-shrink: 0;
  box-sizing: border-box;
  display: flex;
  align-items: center;
  justify-content: center;
  background: #f0f0f0;
  border: 1px solid;
  border-color: #fff #808080 #808080 #fff;
`;

const ScrollTrack = styled.div`
  width: ${(p) => p.$w}px;
  background: repeating-conic-gradient(#fff 0 25%, #ededed 0 50%) 0 0 / 2px 2px;
`;

const Legend = styled.div`
  flex-shrink: 0;
  background: #a0b2c2;
  margin: 0 2px;
  padding-bottom: 1px;
`;

const LegendHead = styled.div`
  height: 20px;
  display: flex;
  box-sizing: border-box;
  padding-left: 1px;
  background: #f0f0f0;
  border-bottom: 1px solid #b0b0b0;
`;

const LegendHeadCell = styled.div`
  width: ${(p) => p.$w}px;
  box-sizing: border-box;
  padding-left: 7px;
  font-family: ${ARIAL};
  font-size: 12px;
  line-height: 21px;
  color: #222;
  border-right: 2px solid #c4c4c4;
  white-space: nowrap;
`;

const LegendRow = styled.div`
  height: 19px;
  display: flex;
  align-items: center;
  padding-left: 6px;
`;

const Swatch = styled.div`
  width: 15px;
  height: 15px;
  flex-shrink: 0;
  background: ${(p) => p.$color};
`;

const LegendName = styled.div`
  width: 190px;
  height: 19px;
  box-sizing: border-box;
  flex-shrink: 0;
  margin-right: 16px;
  padding-left: ${(p) => (p.$selected ? "2px" : "8px")};
  font-family: ${ARIAL};
  font-size: 12px;
  line-height: 20px;
  letter-spacing: -0.1px;
  white-space: nowrap;
  color: ${(p) => (p.$selected ? "#fff" : "#1a1a1a")};
  background: ${(p) => (p.$selected ? "#3399ff" : "transparent")};
`;

const LegendCell = styled.div`
  width: ${(p) => p.$w}px;
  flex-shrink: 0;
  font-family: ${ARIAL};
  font-size: 12px;
  letter-spacing: 0.16px;
  color: #1a1a1a;
  white-space: nowrap;
`;

const GridPanel = styled.div`
  margin-top: 5px;
  height: 261px;
  flex-shrink: 0;
  box-sizing: border-box;
  display: flex;
  flex-direction: column;
  padding: 0 2px;
  border-top: 1px solid #808080;
  border-bottom: 2px solid #a8a8a8;
`;

const GridMain = styled.div`
  flex: 1;
  display: flex;
  min-height: 0;
`;

const GridTable = styled.div`
  flex: 1;
`;

const GridHead = styled.div`
  display: grid;
  grid-template-columns: ${GRID_TEMPLATE};
  height: 21px;
  box-sizing: border-box;
  border-bottom: 1px solid #000;
`;

const HeadCell = styled.div`
  box-sizing: border-box;
  padding-left: 2px;
  text-align: center;
  font-family: ${ARIAL};
  font-size: 12px;
  font-weight: 700;
  line-height: 20px;
  color: #111;
  background: #f0f0f0;
  border-right: 2px solid #222;
  border-left: 1px solid #fff;
  white-space: nowrap;
`;

const GridRow = styled.div`
  display: grid;
  grid-template-columns: ${GRID_TEMPLATE};
  height: 18px;
  background: #000;
  border-bottom: 1px solid #666;
`;

const RowHeader = styled.div`
  box-sizing: border-box;
  padding-left: 6px;
  font-family: ${ARIAL};
  font-size: 12px;
  line-height: 18px;
  color: #111;
  background: #f0f0f0;
  border-right: 2px solid #444;
  border-bottom: 2px solid #444;
`;

const RowCell = styled.div`
  box-sizing: border-box;
  padding-left: 5px;
  overflow: hidden;
  font-family: ${ARIAL};
  font-size: 12px;
  line-height: 18px;
  letter-spacing: ${(p) => (p.$spaced ? "0.23px" : "0")};
  color: #eee;
  white-space: nowrap;
  border-right: 1px solid #666;
`;

const VScroll = styled.div`
  width: 16px;
  display: flex;
  flex-direction: column;
`;

const VTrack = styled.div`
  flex: 1;
  background: #f0f0f0;
  border-left: 1px solid #fff;
  border-right: 1px solid #808080;
`;

const Pager = styled.div`
  height: 16px;
  flex-shrink: 0;
  display: flex;
  align-items: stretch;
`;

const PagerBtn = styled.div`
  width: 15px;
  box-sizing: border-box;
  display: flex;
  align-items: center;
  justify-content: center;
  background: #f0f0f0;
  border: 1px solid;
  border-color: #fff #666 #666 #fff;
`;

const PagerLabel = styled.div`
  width: 46px;
  box-sizing: border-box;
  padding-left: 5px;
  background: #fff;
  font-family: ${ARIAL};
  font-size: 11.5px;
  line-height: 16px;
  color: #222;
`;

const PagerInput = styled.div`
  width: 51px;
  box-sizing: border-box;
  padding-left: 5px;
  background: #fff;
  font-family: ${ARIAL};
  font-size: 12px;
  line-height: 16px;
  color: #222;
`;

const PagerGap = styled.div`
  width: 5px;
  background: #f0f0f0;
`;

const PagerThumb = styled.div`
  width: 1003px;
  box-sizing: border-box;
  background: #f0f0f0;
  border: 1px solid;
  border-color: #fff #808080 #808080 #fff;
`;

const PagerTrack = styled.div`
  flex: 1;
  background: repeating-conic-gradient(#fff 0 25%, #ededed 0 50%) 0 0 / 2px 2px;
`;

const PagerCorner = styled.div`
  width: 16px;
  background: #f0f0f0;
`;

const StatusBar = styled.div`
  height: 20px;
  flex-shrink: 0;
  box-sizing: border-box;
  display: flex;
  align-items: center;
  padding: 0 3px 0 2px;
  border-bottom: 1px solid #a8a8a8;
`;

const StatusHelp = styled.div`
  flex: 1;
  font-size: 10.7px;
  color: #111;
  white-space: nowrap;
`;

const StatusPane = styled.div`
  width: ${(p) => p.$w}px;
  height: 16px;
  flex-shrink: 0;
  box-sizing: border-box;
  margin-left: ${(p) => p.$ml || 0}px;
  padding-left: 1px;
  font-size: ${(p) => (p.$tight ? "10px" : "10.7px")};
  line-height: 15px;
  letter-spacing: ${(p) => (p.$tight ? "-0.3px" : "0")};
  color: #111;
  white-space: nowrap;
  overflow: hidden;
  border: 1px solid;
  border-color: #a8a8a8 #f8f8f8 #f8f8f8 #a8a8a8;
`;

const Taskbar = styled.div`
  height: 42px;
  flex-shrink: 0;
  box-sizing: border-box;
  display: flex;
  align-items: center;
  padding-left: 2px;
  background: #f0f0f0;
  border-bottom: 2px solid #a8a8a8;
`;

const StartButton = styled.div`
  width: 52px;
  height: 37px;
  flex-shrink: 0;
  box-sizing: border-box;
  display: flex;
  align-items: center;
  gap: 1px;
  padding-left: 2px;
  font-size: 11px;
  font-weight: 700;
  color: #111;
  background: #f0f0f0;
  border: 1px solid;
  border-color: #fff #555 #555 #fff;
`;

const QuickIcon = styled.div`
  width: ${(p) => p.$w}px;
  margin-left: ${(p) => p.$ml || 0}px;
  flex-shrink: 0;
  display: flex;
  align-items: center;
  justify-content: center;
`;

const TaskButton = styled.div`
  width: ${(p) => p.$w}px;
  height: 37px;
  flex-shrink: 0;
  box-sizing: border-box;
  margin-right: 3px;
  display: flex;
  align-items: center;
  justify-content: center;
  background: ${(p) => (p.$active ? "#fafafa" : "#f0f0f0")};
  border: 1px solid;
  border-color: ${(p) => (p.$active ? "#555 #fff #fff #555" : "#fff #a0a0a0 #a0a0a0 #fff")};
`;

const TaskGrip = styled.div`
  width: 3px;
  height: 37px;
  flex-shrink: 0;
  margin-right: 2px;
  background: #a8a8a8;
  border-right: 1px solid #fff;
`;

const Tray = styled.div`
  margin-left: auto;
  width: 140px;
  height: 36px;
  box-sizing: border-box;
  display: flex;
  align-items: center;
  padding-left: 6px;
  gap: 6px;
  border-left: 1px solid #a8a8a8;
  border-top: 1px solid #c8c8c8;
`;

const Clock = styled.div`
  width: 64px;
  margin-right: -4px;
  text-align: center;
  font-size: 11px;
  line-height: 16px;
  color: #111;
`;
